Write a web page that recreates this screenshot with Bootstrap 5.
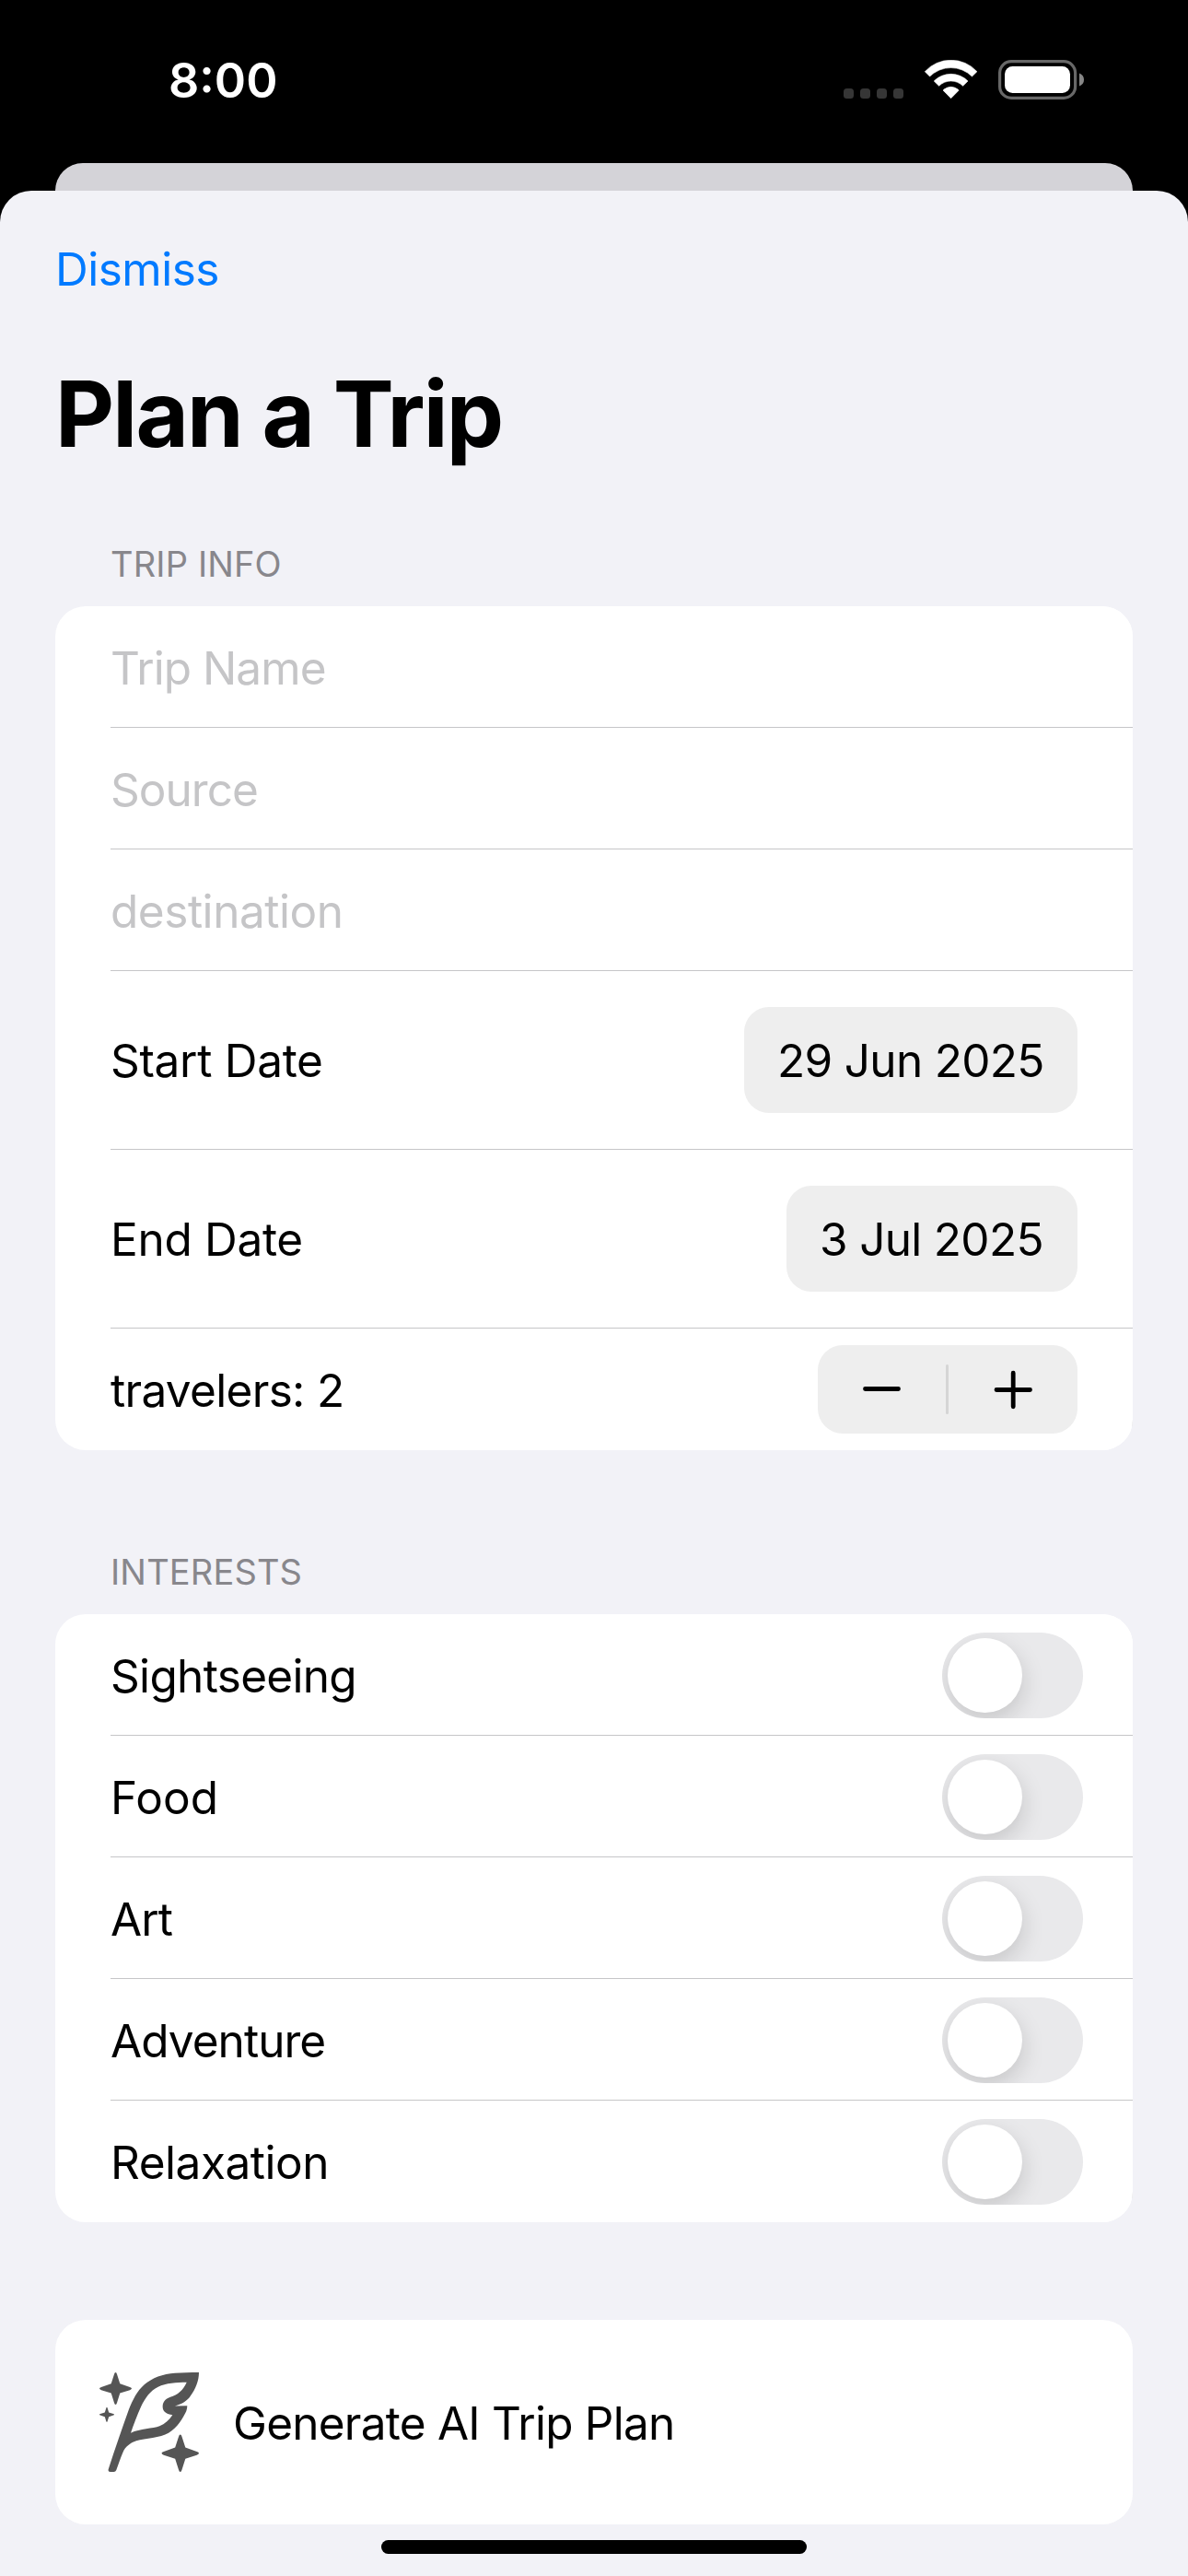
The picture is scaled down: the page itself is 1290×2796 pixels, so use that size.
<!DOCTYPE html>
<html lang="en">
<head>
<meta charset="utf-8">
<meta name="viewport" content="width=device-width, initial-scale=1">
<title>Plan a Trip</title>
<link href="https://cdn.jsdelivr.net/npm/bootstrap@5.3.0/dist/css/bootstrap.min.css" rel="stylesheet">
<style>
  body { background: #000; color: #000; font-family: Inter, "Liberation Sans", sans-serif; font-size: 49.5px; line-height: 60px; width: 1290px; height: 2796px; overflow: hidden; }
  .status { height: 177px; padding: 0 113px 4px 183px; }
  .clock { padding-top: 3px; color: #fff; font-size: 52px; font-weight: 600; }
  .back-sheet { height: 30px; margin: 0 60px; background: #d4d3d8; border-radius: 33px 33px 0 0; }
  .sheet { height: 2589px; padding: 0 60px; background: #f2f2f7; border-radius: 34px 34px 0 0; }
  .dismiss { height: 170px; color: #007aff; letter-spacing: -.5px; }
  .page-title { height: 144px; font-size: 99px; font-weight: 700; letter-spacing: -1.8px; line-height: 144px; }
  .section-label { font-size: 38px; line-height: 46px; color: #88878c; padding-left: 60px; letter-spacing: .15px; }
  .label-first { margin: 68px 0 23px; }
  .label-next { margin: 109px 0 23px; }
  .group { border-radius: 33px; background: #fff; }
  .group .line { height: 132px; margin-left: 60px; padding: 2px 60px 0 0; background: #fff; }
  .group .line.tall { height: 194px; padding-top: 0; }
  .group .line + .line { box-shadow: 0 -1px #c6c6c8; }
  .hint { color: #c5c5c7; }
  .chip { height: 115px; margin-bottom: 1px; padding: 0 36px; border-radius: 27px; background: #eee; }
  .chip-long { width: 362px; }
  .chip-short { width: 316px; }
  .stepper { width: 282px; height: 96px; margin-bottom: 2px; border-radius: 27px; background: #eee; }
  .group .line.has-switch { padding: 0 54px 0 0; }
  .has-switch .caption { padding-top: 2px; }
  .toggle { width: 153px; height: 93px; margin-top: 1px; padding: 6px; border-radius: 47px; background: #e9e9eb; overflow: hidden; }
  .thumb { width: 81px; height: 81px; background: #fff; box-shadow: 1px 9px 24px rgba(0,0,0,.15); }
  .generate { height: 222px; margin-top: 106px; padding-left: 48px; gap: 37px; border-radius: 33px; background: #fff; letter-spacing: -.77px; }
  .generate span { padding-top: 2px; }
  .home-bar { width: 462px; height: 15px; margin-top: 17px; background: #000; }
  .ls-a { letter-spacing: -.3px; }
  .ls-b { letter-spacing: -.47px; }
  .ls-c { letter-spacing: -.68px; }
  .ls-d { letter-spacing: -.95px; }
</style>
</head>
<body>
<header class="status d-flex align-items-center justify-content-between">
  <span class="clock">8:00</span>
  <svg width="261" height="43" viewBox="0 0 261 43" aria-hidden="true">
    <g fill="#363636">
      <rect x="0" y="31" width="11" height="11" rx="3.5"/><rect x="18" y="31" width="11" height="11" rx="3.5"/>
      <rect x="36" y="31" width="11" height="11" rx="3.5"/><rect x="54" y="31" width="11" height="11" rx="3.5"/>
    </g>
    <g transform="translate(88)" fill="#fff" stroke="#fff" stroke-width=".6" stroke-linejoin="round">
      <path d="M.3 12.7A38.3 38.3 0 0 1 56.9 12.7L51.5 18A32.6 32.6 0 0 0 5.6 18Z"/>
      <path d="M10.2 23A26 26 0 0 1 47 23L41.6 28.3A18.5 18.5 0 0 0 15.6 28.3Z"/>
      <path d="M20 33Q24 29.3 28.6 29.3Q33.3 29.3 37.2 33L28.6 41.7Z"/>
    </g>
    <rect x="169.6" y="1.6" width="82" height="39.8" rx="12.5" fill="none" stroke="#686868" stroke-width="3.2"/>
    <rect x="175" y="7" width="71" height="29" rx="8.5" fill="#fff"/>
    <path d="M256 14.5Q261 16.5 261 21.5T256 28.5Z" fill="#868686"/>
  </svg>
</header>
<div class="back-sheet"></div>
<main class="sheet">
  <div class="dismiss d-flex align-items-center">Dismiss</div>
  <h1 class="page-title m-0">Plan a Trip</h1>

  <div class="section-label label-first">TRIP INFO</div>
  <section class="group overflow-hidden">
    <div class="line d-flex align-items-center hint ls-d">Trip Name</div>
    <div class="line d-flex align-items-center hint ls-d">Source</div>
    <div class="line d-flex align-items-center hint ls-b">destination</div>
    <div class="line tall d-flex align-items-center justify-content-between">
      <span class="ls-a">Start Date</span>
      <span class="chip chip-long d-flex align-items-center text-nowrap ls-c">29 Jun 2025</span>
    </div>
    <div class="line tall d-flex align-items-center justify-content-between">
      <span class="ls-a">End Date</span>
      <span class="chip chip-short d-flex align-items-center text-nowrap ls-c">3 Jul 2025</span>
    </div>
    <div class="line d-flex align-items-center justify-content-between">
      <span class="ls-c">travelers: 2</span>
      <div class="stepper d-flex">
        <svg width="282" height="96" viewBox="0 0 282 96" aria-hidden="true">
          <rect x="139" y="21" width="3" height="54" rx="1.5" fill="#d5d5d5"/>
          <path d="M51.5 47.5H87.5M194 48.5H230.5M212.2 30.2V66.8" fill="none" stroke="#000" stroke-width="4.8" stroke-linecap="round"/>
        </svg>
      </div>
    </div>
  </section>

  <div class="section-label label-next">INTERESTS</div>
  <section class="group overflow-hidden">
    <div class="line has-switch d-flex align-items-center justify-content-between">
      <span class="caption ls-c">Sightseeing</span><span class="toggle d-flex"><span class="thumb rounded-circle"></span></span>
    </div>
    <div class="line has-switch d-flex align-items-center justify-content-between">
      <span class="caption">Food</span><span class="toggle d-flex"><span class="thumb rounded-circle"></span></span>
    </div>
    <div class="line has-switch d-flex align-items-center justify-content-between">
      <span class="caption ls-d">Art</span><span class="toggle d-flex"><span class="thumb rounded-circle"></span></span>
    </div>
    <div class="line has-switch d-flex align-items-center justify-content-between">
      <span class="caption ls-d">Adventure</span><span class="toggle d-flex"><span class="thumb rounded-circle"></span></span>
    </div>
    <div class="line has-switch d-flex align-items-center justify-content-between">
      <span class="caption ls-b">Relaxation</span><span class="toggle d-flex"><span class="thumb rounded-circle"></span></span>
    </div>
  </section>

  <section class="generate d-flex align-items-center">
    <svg width="108" height="108" viewBox="0 0 108 108" fill="#555" aria-hidden="true">
      <path fill-rule="evenodd" d="M108 0C98 0 90 .2 82 .7C69 1.5 57 6 48.7 13.3C41 20 36 30 32 40C25 60 17 82 9.6 105.5Q9.3 108 12 108H15.5Q17.5 108 18.3 106C20.5 100 23 92 25.5 86.7C28 81 33 76.5 40 74.3C50 71.3 66 71 75 65.7C85 60 91 49 94.3 42Q95.3 39 95.3 36.3L82 36.5C90 34 95 31 98.7 25.7C104.5 18 108 9 108 0ZM94.7 10.7C84 10.8 72 11.5 63.7 15.7C55 20 49.5 28 45.3 36.7C41 46 37 57 34 65.7C44 61 58 61 65.3 58.3C71 56 75.5 52 79.3 46.3C73 45.5 69 42.5 68.7 38.3C68.3 33 70.5 29 77 26.7C85 24.5 91 19 94.7 10.7Z"/>
      <path id="spark" d="M17.5 0Q18.5 0 19 2L22.3 12.2L33 16Q35 16.7 35 17.6T33 19.2L22.3 22.6L19 33Q18.5 35 17.5 35T16 33L12.7 22.6L2 19.2Q0 18.5 0 17.6T2 16L12.7 12.2L16 2Q16.5 0 17.5 0Z"/>
      <use href="#spark" transform="translate(0 37.8) scale(.457)"/>
      <use href="#spark" transform="translate(67.5 67.5) scale(1.157)"/>
    </svg>
    <span>Generate AI Trip Plan</span>
  </section>
  <div class="home-bar rounded-pill mx-auto"></div>
</main>
<script src="https://cdn.jsdelivr.net/npm/bootstrap@5.3.0/dist/js/bootstrap.bundle.min.js"></script>
</body>
</html>
